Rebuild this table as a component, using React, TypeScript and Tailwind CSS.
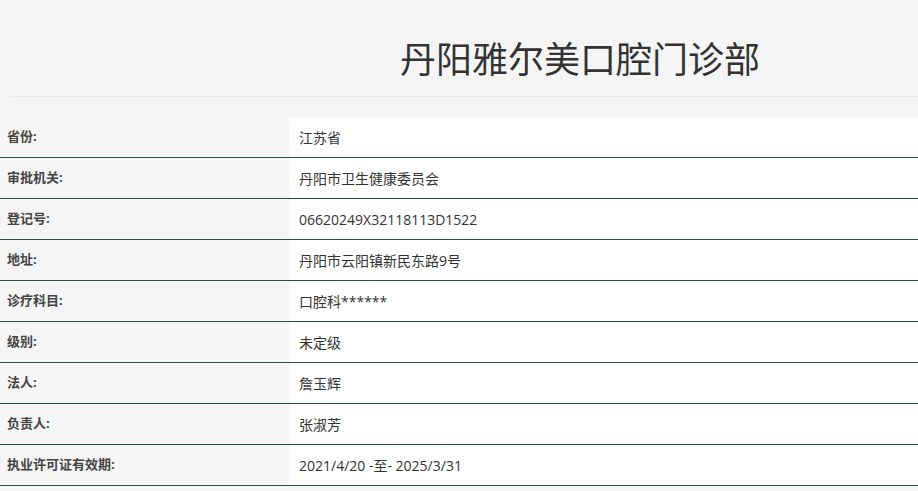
import React from 'react'

const rows: [string, string][] = [
  ['省份:', '江苏省'],
  ['审批机关:', '丹阳市卫生健康委员会'],
  ['登记号:', '06620249X32118113D1522'],
  ['地址:', '丹阳市云阳镇新民东路9号'],
  ['诊疗科目:', '口腔科******'],
  ['级别:', '未定级'],
  ['法人:', '詹玉辉'],
  ['负责人:', '张淑芳'],
  ['执业许可证有效期:', '2021/4/20 -至- 2025/3/31'],
]

const font = { fontFamily: '"Open Sans", "Noto Sans CJK SC", sans-serif' }

const App = () => {
  return (
    <div className="w-[918px] h-[491px] overflow-hidden bg-[#f5f5f5]" style={font}>
      <div className="pt-[40px] pl-[400px] h-[96px]">
        <h1 className="text-[36px] leading-[40px] text-[#333] font-normal">
          丹阳雅尔美口腔门诊部
        </h1>
      </div>
      <div className="ml-[10px] border-t border-[#e8e8e8]" />
      <div className="mt-[20px]">
        {rows.map(([label, value], i) => (
          <div key={i} className="flex h-[41px] border-b border-[#1d5843]">
            <div className="w-[289px] flex items-center pl-[7px] text-[13px] font-bold text-[#444]">
              {label}
            </div>
            <div className="flex-1 flex items-center bg-white pl-[10px] text-[14px] text-[#333]">
              {value}
            </div>
          </div>
        ))}
      </div>
    </div>
  )
}

export default App
